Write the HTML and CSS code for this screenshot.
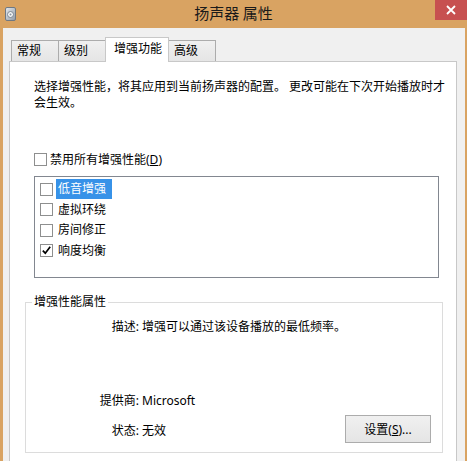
FILE: index.html
```html
<!DOCTYPE html>
<html lang="zh-CN">
<head>
  <meta charset="UTF-8" />
  <meta name="viewport" content="width=device-width, initial-scale=1.0"/>
  <title>扬声器 属性</title>
  <link rel="stylesheet" href="styles.css">
</head>
<body>

<div class="window">
  <div class="titlebar">
    <div class="tb-left">
      <svg class="app-icon" width="11" height="14" viewBox="0 0 11 14">
        <defs>
          <linearGradient id="spk" x1="0" y1="0" x2="1" y2="1">
            <stop offset="0" stop-color="#e6ebf0"/>
            <stop offset="1" stop-color="#8f99a5"/>
          </linearGradient>
        </defs>
        <rect x="0.5" y="0.5" width="10" height="13" rx="1.5" fill="url(#spk)" stroke="#6f7882"/>
        <circle cx="5.5" cy="7.5" r="3" fill="#f4f6f8" stroke="#7d8792"/>
        <circle cx="5.5" cy="7.5" r="1" fill="#8a94a0"/>
      </svg>
    </div>
    <div class="title">扬声器 属性</div>
    <div class="tb-right">
      <div class="close">
        <svg width="10" height="10" viewBox="0 0 10 10">
          <path d="M1 1 L9 9 M9 1 L1 9" stroke="#fff" stroke-width="1.8"/>
        </svg>
      </div>
    </div>
  </div>

  <div class="client">
    <div class="tabs">
      <div class="tab">常规</div>
      <div class="tab">级别</div>
      <div class="tab active">增强功能</div>
      <div class="tab">高级</div>
    </div>

    <div class="panel">
      <p class="intro">选择增强性能，将其应用到当前扬声器的配置。 更改可能在下次开始播放时才会生效。</p>

      <div class="check-row">
        <span class="box"></span>
        <span>禁用所有增强性能(<u>D</u>)</span>
      </div>

      <div class="list">
        <div class="item">
          <span class="box"></span>
          <span class="item-text selected">低音增强</span>
        </div>
        <div class="item">
          <span class="box"></span>
          <span class="item-text">虚拟环绕</span>
        </div>
        <div class="item">
          <span class="box"></span>
          <span class="item-text">房间修正</span>
        </div>
        <div class="item">
          <span class="box checked">
            <svg width="11" height="11" viewBox="0 0 11 11">
              <path d="M1.8 5.6 L4.3 8.2 L9.2 1.8" fill="none" stroke="#000" stroke-width="1.7"/>
            </svg>
          </span>
          <span class="item-text">响度均衡</span>
        </div>
      </div>

      <fieldset class="group">
        <legend>增强性能属性</legend>
        <div class="prop desc">
          <span class="prop-label">描述:</span>
          <span class="prop-value">增强可以通过该设备播放的最低频率。</span>
        </div>
        <div class="prop provider">
          <span class="prop-label">提供商:</span>
          <span class="prop-value">Microsoft</span>
        </div>
        <div class="prop status">
          <span class="prop-label">状态:</span>
          <span class="prop-value">无效</span>
          <button class="btn">设置(<u>S</u>)...</button>
        </div>
      </fieldset>
    </div>
  </div>
</div>

</body>
</html>
```

FILE: styles.css
```css
body {
  margin: 0;
  width: 467px;
  height: 461px;
  overflow: hidden;
  background: #d9a362;
  font-family: "Noto Sans", "Noto Sans CJK SC", sans-serif;
  font-size: 12px;
  color: #000;
}

.titlebar {
  display: grid;
  grid-template-columns: 1fr auto 1fr;
  height: 28px;
}

.tb-left {
  display: flex;
  align-items: center;
  padding-left: 5px;
}

.title {
  font-family: "Noto Sans CJK SC", sans-serif;
  font-size: 15px;
  line-height: 26px;
  color: #1a1a1a;
}

.tb-right {
  display: flex;
  justify-content: flex-end;
  align-items: flex-start;
}

.close {
  width: 32px;
  height: 20px;
  background: #c75050;
  display: flex;
  align-items: center;
  justify-content: center;
}

.client {
  margin: 0 2px 0 3px;
  height: 433px;
  background: #f0f0f0;
  padding: 0 8px 0 6px;
}

.tabs {
  display: flex;
  align-items: flex-end;
  padding: 9px 0 0 2px;
}

.tab {
  box-sizing: border-box;
  height: 21px;
  min-width: 48px;
  padding: 0 4px 0 5px;
  border: 1px solid #acacac;
  border-bottom: none;
  background: linear-gradient(#f0f0f0, #e5e5e5);
  line-height: 20px;
}

.tab + .tab {
  margin-left: -1px;
}

.tab.active {
  position: relative;
  z-index: 1;
  height: 25px;
  margin-bottom: -1px;
  padding: 0 6px 0 8px;
  background: #fff;
  border-color: #c8c8c8;
  line-height: 22px;
}

.panel {
  box-sizing: border-box;
  height: 420px;
  border: 1px solid #c8c8c8;
  background: #fff;
  padding: 17px 13px 0 15px;
}

.intro {
  margin: 0 -10px 0 9px;
  line-height: 16px;
}

.check-row {
  display: flex;
  align-items: center;
  height: 16px;
  margin: 40px 0 0 9px;
}

.box {
  box-sizing: border-box;
  width: 13px;
  height: 13px;
  border: 1px solid #8e8f8f;
  background: #fff;
  margin-right: 3px;
  display: flex;
  align-items: center;
  justify-content: center;
  flex: none;
}

.list {
  box-sizing: border-box;
  height: 102px;
  margin: 9px 4px 0 9px;
  border: 1px solid #828790;
  padding: 2px 0 0 5px;
}

.item {
  display: flex;
  align-items: center;
  height: 20.5px;
}

.item-text {
  line-height: 20px;
  padding: 0 6px 0 2px;
}

.item-text.selected {
  background: #3792e8;
  color: #fff;
}

.group {
  margin: 16px 0 0 0;
  min-width: 0;
  border: 1px solid #dcdcdc;
  padding: 0 11px 9px 6px;
}

.group legend {
  padding: 0 2px;
  line-height: 16px;
}

.prop {
  display: flex;
  line-height: 16px;
}

.prop-label {
  width: 107px;
  text-align: right;
  flex: none;
}

.prop-value {
  margin-left: 3px;
}

.desc {
  margin-top: 9px;
}

.provider {
  margin-top: 58px;
}

.status {
  margin-top: 6px;
  align-items: flex-end;
}

.status .prop-label,
.status .prop-value {
  padding-bottom: 4px;
}

.btn {
  margin-left: auto;
  box-sizing: border-box;
  width: 86px;
  height: 28px;
  padding: 0;
  border: 1px solid #acacac;
  background: linear-gradient(#f0f0f0, #e5e5e5);
  font-family: inherit;
  font-size: 12px;
  color: #000;
}
```
